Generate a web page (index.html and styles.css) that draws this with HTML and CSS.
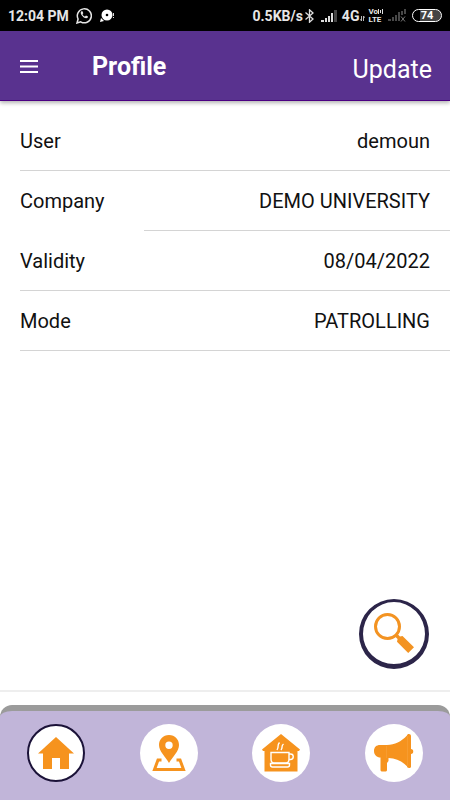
FILE: index.html
```html
<!DOCTYPE html>
<html lang="en">
<head>
  <meta charset="UTF-8">
  <meta name="viewport" content="width=device-width, initial-scale=1.0">
  <title>Profile</title>
  <link rel="stylesheet" href="styles.css">
</head>
<body>

<div class="status-bar">
  <span>12:04 PM</span>
  <svg class="whatsapp" width="16" height="17" viewBox="0 0 16 17">
    <path d="M1 16l1.100-4A7 7 0 1 1 4.700 14.800Z" fill="none" stroke="#e6e6e6" stroke-width="1.500"/>
    <path d="M5.500 4.300c-1 .6-1.100 2 0 3.700 1.300 2 3.200 3.300 4.800 3.300 1 0 1.800-.8 1.700-1.700l-2-1-1 1C7.800 9.200 7 8.300 6.500 7.300l.8-1-.8-2z" fill="#e6e6e6"/>
  </svg>
  <svg class="chat" width="15" height="14" viewBox="0 0 15 14">
    <circle cx="7" cy="6" r="5.500" fill="#fff"/>
    <path d="M0 13l1-4 3 3z" fill="#fff"/>
    <circle cx="7" cy="6" r="1.300" fill="#000"/>
    <path d="M13.500 4v3M13.500 8v1" stroke="#ddd"/>
  </svg>

  <div class="status-right">
    <span>0.5KB/s</span>
    <svg class="bluetooth" width="9" height="14" viewBox="0 0 9 14">
      <path d="M0.500 3.500l7.500 6.500-3.500 3.200V.8L8 4 .5 10.500" fill="none" stroke="#ddd" stroke-width="1.300"/>
    </svg>
    <svg class="signal" width="17" height="12" viewBox="0 0 17 12">
      <path d="M0 12v-2h3v2zM4 12V8h2v4zM7 12V6h2v6zM10 12V3h2v9z" fill="#ddd"/>
      <path d="M13 12V0h3v12z" fill="#444"/>
    </svg>
    <span>4G</span>
    <svg class="data" width="5" height="5" viewBox="0 0 5 5">
      <path d="M1.500 0v5M3.500 0v5M0 3.500l1.500 1M5 1.500L3.500.5" stroke="#bbb" fill="none"/>
    </svg>
    <span class="volte">
      <span>Vo<svg width="5" height="5" viewBox="0 0 5 5"><path d="M.5 0v5M2.500 1v3M4.500 0v5" stroke="#ddd"/></svg></span>
      <span>LTE</span>
    </span>
    <svg class="signal-off" width="18" height="13" viewBox="0 0 18 13">
      <path d="M0 12v-2h3v2zM4 12V8h2v4zM7 12V6h2v6zM10 12V3h2v9zM13 6V2h2v4zM16 0h2v5h-2z" fill="#484848"/>
      <path d="M13 7.500l4 5M17 7.500l-4 5" stroke="#777"/>
    </svg>
    <span class="battery">74</span>
  </div>
</div>

<header class="toolbar">
  <button type="button" class="menu-btn" aria-label="Menu">
    <svg width="18" height="14" viewBox="0 0 18 14">
      <path d="M0 1h18M0 6.500h18M0 12h18" stroke="#fff" stroke-width="2"/>
    </svg>
  </button>
  <h1>Profile</h1>
  <button type="button" class="update-btn">Update</button>
</header>

<main>
  <dl class="details">
    <div class="row"><dt>User</dt><dd>demoun</dd></div>
    <div class="row row-inset"><dt>Company</dt><dd>DEMO UNIVERSITY</dd></div>
    <div class="row"><dt>Validity</dt><dd>08/04/2022</dd></div>
    <div class="row"><dt>Mode</dt><dd>PATROLLING</dd></div>
  </dl>

  <button type="button" class="search-btn" aria-label="Search">
    <svg width="40" height="40" viewBox="0 0 40 40">
      <circle cx="13.500" cy="13.500" r="12" fill="none" stroke="#f39322" stroke-width="3"/>
      <path d="M21 23.500l2.500-2.500 2.500 2.500 2.500-.5L40 34.200 34.200 40 23 28.800l.6-2.800z" fill="#f39322"/>
    </svg>
  </button>
</main>

<footer>
  <nav class="tabs">
    <a href="#home" class="tab active" aria-label="Home">
      <svg width="36" height="32" viewBox="0 0 36 32">
        <path d="M18 0l18 16.500h-5V32h-9V21h-8v11H5V16.500H0z" fill="#f6931e"/>
      </svg>
    </a>
    <a href="#location" class="tab" aria-label="Location">
      <svg width="34" height="36" viewBox="0 0 34 36">
        <path d="M17 0C11 0 7 4.500 7 10c0 6.500 6 11 10 18 4-7 10-11.500 10-18C27 4.500 23 0 17 0zm0 14a3.700 3.700 0 1 1 0-7.400 3.700 3.700 0 0 1 0 7.400z" fill="#f6931e" fill-rule="evenodd"/>
        <path d="M9.500 25H6L2.500 34.500h29L28 25h-3.500" fill="none" stroke="#f6931e" stroke-width="3"/>
      </svg>
    </a>
    <a href="#break" class="tab" aria-label="Break">
      <svg width="38" height="38" viewBox="0 0 38 38">
        <path d="M19 0l19 15.500-1 1.500h-1.500v20.500H2.500V17H1l-1-1.500z" fill="#f6931e"/>
        <g fill="none" stroke="#fff" stroke-width="1.400">
          <path d="M9 18.500h18V25c0 2.500-1 4-3 4H12c-2 0-3-1.500-3-4z"/>
          <path d="M27 20h1.500a2.700 2.700 0 0 1 0 5.500H27"/>
          <path d="M8.500 29.500V31c0 1 1 2 2 2h15c1 0 2-1 2-2v-1.500z"/>
          <path d="M17.500 8.500c-3 3.500 0 3.500-2.500 7.500M21.500 10c-3 2.500 0 3-2.500 6"/>
        </g>
      </svg>
    </a>
    <a href="#announcements" class="tab" aria-label="Announcements">
      <svg width="40" height="38" viewBox="0 0 40 38">
        <path d="M6 11h7c8 0 14-3.500 20-9.500C33 .5 34 0 35 0s2 .7 2 2v13c3 0 3 5 0 5v12.500c0 1-.8 1.500-2 1.500s-2-.7-2-1.700C28 27 22 24.500 14.500 24v3L13 29v7c0 1-1 1.500-2 1.500H8.500c-1 0-2-.5-2-1.500V23.500C3 23.500 0 21 0 17s2.500-6 6-6z" fill="#f6931e"/>
        <path d="M12.500 12v12M33.500 2v30" stroke="#f79c30"/>
      </svg>
    </a>
  </nav>
</footer>

</body>
</html>
```

FILE: styles.css
```css
* {
  box-sizing: border-box;
}

body {
  font-family: Roboto, "Liberation Sans", sans-serif;
  background-color: #fff;
  color: #111;
  margin: 0;
  min-height: 100vh;
  display: flex;
  flex-direction: column;
}

button {
  background: none;
  border: none;
  padding: 0;
  font: inherit;
  color: inherit;
  cursor: pointer;
}

svg {
  display: block;
  flex: none;
}

/* status bar */
.status-bar {
  display: flex;
  align-items: center;
  height: 31px;
  padding: 0 8px;
  background-color: #000;
  color: #e6e6e6;
  font-size: 14px;
  font-weight: 700;
}

.whatsapp {
  margin-left: 7px;
}

.chat {
  margin-left: 8px;
}

.status-right {
  display: flex;
  align-items: center;
  margin-left: auto;
}

.bluetooth {
  margin-left: 2px;
}

.signal {
  margin: 0 4px 0 7px;
}

.data {
  margin: 6px 3px 0 1px;
}

.volte {
  display: grid;
  grid-template-rows: 8px 8px;
  font-size: 8px;
  line-height: 8px;
}

.volte svg {
  display: inline-block;
}

.signal-off {
  margin: 0 6px 0 5px;
}

.battery {
  width: 30px;
  height: 13px;
  border: 1px solid #fff;
  border-radius: 7px;
  background: linear-gradient(to right, #000 25%, #444 25%);
  color: #fff;
  font-size: 11px;
  line-height: 11px;
  text-align: center;
}

/* header */
.toolbar {
  display: flex;
  align-items: center;
  height: 70px;
  padding: 2px 18px 0 20px;
  background-color: #59328f;
  border-bottom: 1px solid #4b0082;
  box-shadow: 0 2px 4px rgba(0, 0, 0, 0.3);
  color: #fff;
}

.toolbar h1 {
  margin: 0 auto 0 54px;
  font-size: 25px;
  font-weight: 700;
}

.update-btn {
  padding-top: 6px;
  font-size: 25px;
}

/* profile details */
main {
  flex: 1;
  position: relative;
}

.details {
  margin: 10px 0 0;
  padding-left: 20px;
  font-size: 20px;
}

.row {
  display: flex;
  align-items: center;
  height: 60px;
  border-bottom: 1px solid #d4d4d4;
}

.row dd {
  flex: 1;
  margin: 0;
  padding-right: 20px;
  text-align: right;
}

/* the line starts after the label */
.row-inset {
  border-bottom: none;
}

.row-inset dt {
  width: 124px;
}

.row-inset dd {
  height: 60px;
  border-bottom: 1px solid #d4d4d4;
  line-height: 60px;
}

.search-btn {
  position: absolute;
  right: 21px;
  bottom: 21px;
  width: 70px;
  height: 70px;
  display: flex;
  align-items: center;
  justify-content: center;
  background-color: #fff;
  border: 4px solid #2c2549;
  border-top-width: 3px;
  border-bottom-width: 5px;
  border-radius: 50%;
}

/* bottom tabs */
footer {
  padding-top: 13px;
  border-top: 2px solid #eee;
}

.tabs {
  display: grid;
  grid-template-columns: repeat(4, 1fr);
  justify-items: center;
  padding: 13px 0 18px;
  background-color: #c1b5d9;
  border-top: 6px solid #9b9b9b;
  border-radius: 12px 12px 0 0;
}

.tab {
  display: flex;
  align-items: center;
  justify-content: center;
  width: 58px;
  height: 58px;
  background-color: #fff;
  border-radius: 50%;
}

.tab.active {
  border: 2px solid #1b1238;
}
```
